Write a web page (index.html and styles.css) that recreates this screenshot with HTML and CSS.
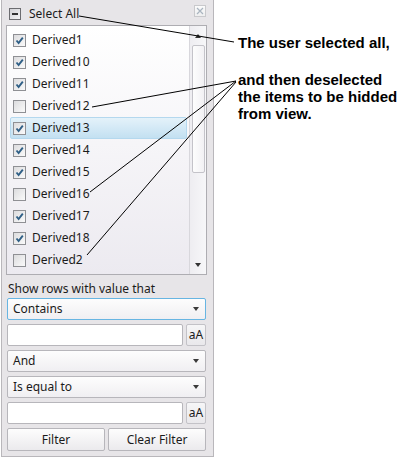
FILE: index.html
```html
<!DOCTYPE html>
<html>
<head>
<meta charset="utf-8">
<link rel="stylesheet" href="styles.css">
</head>
<body>
<div class="page">
  <div class="panel">
    <div class="header">
      <span class="chk chk-partial"><span class="dash"></span></span>
      <span class="header-label">Select All</span>
      <span class="spacer"></span>
      <span class="close-btn">
        <svg width="8" height="8" viewBox="0 0 8 8"><path d="M1 1L7 7M7 1L1 7" stroke="#a9b4bf" stroke-width="1.2" fill="none"/></svg>
      </span>
    </div>
    <div class="listbox">
      <div class="rows">
        <div class="row"><span class="chk on"><svg viewBox="0 0 11 11"><path d="M2.5 5.5L4.6 8L8.8 2.6" /></svg></span><span class="lbl">Derived1</span></div>
        <div class="row"><span class="chk on"><svg viewBox="0 0 11 11"><path d="M2.5 5.5L4.6 8L8.8 2.6" /></svg></span><span class="lbl">Derived10</span></div>
        <div class="row"><span class="chk on"><svg viewBox="0 0 11 11"><path d="M2.5 5.5L4.6 8L8.8 2.6" /></svg></span><span class="lbl">Derived11</span></div>
        <div class="row"><span class="chk"></span><span class="lbl">Derived12</span></div>
        <div class="row selected"><span class="chk on"><svg viewBox="0 0 11 11"><path d="M2.5 5.5L4.6 8L8.8 2.6" /></svg></span><span class="lbl">Derived13</span></div>
        <div class="row"><span class="chk on"><svg viewBox="0 0 11 11"><path d="M2.5 5.5L4.6 8L8.8 2.6" /></svg></span><span class="lbl">Derived14</span></div>
        <div class="row"><span class="chk on"><svg viewBox="0 0 11 11"><path d="M2.5 5.5L4.6 8L8.8 2.6" /></svg></span><span class="lbl">Derived15</span></div>
        <div class="row"><span class="chk"></span><span class="lbl">Derived16</span></div>
        <div class="row"><span class="chk on"><svg viewBox="0 0 11 11"><path d="M2.5 5.5L4.6 8L8.8 2.6" /></svg></span><span class="lbl">Derived17</span></div>
        <div class="row"><span class="chk on"><svg viewBox="0 0 11 11"><path d="M2.5 5.5L4.6 8L8.8 2.6" /></svg></span><span class="lbl">Derived18</span></div>
        <div class="row"><span class="chk"></span><span class="lbl">Derived2</span></div>
      </div>
      <div class="scrollbar">
        <span class="arrow up"></span>
        <span class="thumb"></span>
        <span class="track-rest"></span>
        <span class="arrow down"></span>
      </div>
    </div>
    <div class="filter-label">Show rows with value that</div>
    <div class="form">
      <div class="dropdown focused"><span class="dd-text">Contains</span><span class="dd-arrow"></span></div>
      <div class="input-row"><span class="textbox"></span><span class="case-btn">aA</span></div>
      <div class="dropdown"><span class="dd-text">And</span><span class="dd-arrow"></span></div>
      <div class="dropdown"><span class="dd-text">Is equal to</span><span class="dd-arrow"></span></div>
      <div class="input-row"><span class="textbox"></span><span class="case-btn">aA</span></div>
      <div class="buttons"><span class="btn">Filter</span><span class="btn">Clear Filter</span></div>
    </div>
  </div>
  <div class="notes">
    <p class="note note-first">The user selected all,</p>
    <p class="note note-second">and then deselected<br>the items to be hidded<br>from view.</p>
  </div>
</div>
<svg class="leaders" width="401" height="462" viewBox="0 0 401 462">
  <g stroke="#000" stroke-width="1" fill="none">
    <path d="M79 16L234 42"/>
    <path d="M92 107L236 81"/>
    <path d="M90 192L236 81"/>
    <path d="M87 255L236 82"/>
  </g>
</svg>
</body>
</html>
```
FILE: styles.css
```css
html, body {
  margin: 0;
  padding: 0;
  background: #ffffff;
}
body {
  width: 401px;
  height: 462px;
  overflow: hidden;
  position: relative;
  font-family: "Noto Sans", "Liberation Sans", sans-serif;
  font-size: 12px;
  color: #1b1b1b;
}
.page {
  display: flex;
  align-items: flex-start;
}
.panel {
  margin-left: 1px;
  width: 213px;
  height: 457px;
  box-sizing: border-box;
  border: 1px solid #b9b7bb;
  border-top: none;
  background: #e7e5e8;
  padding: 0 6px 5px 4px;
  display: flex;
  flex-direction: column;
}
.header {
  height: 25px;
  display: flex;
  align-items: center;
  padding-left: 3px;
  box-sizing: border-box;
  padding-top: 8px;
  padding-bottom: 5px;
}
.header-label {
  margin-left: 8px;
  line-height: 16px;
  font-size: 12px;
}
.spacer { flex: 1; }
.close-btn {
  width: 12px;
  height: 12px;
  box-sizing: border-box;
  border: 1px solid #c9c9cc;
  background: linear-gradient(#fbfbfb, #eeeeef);
  display: flex;
  align-items: center;
  justify-content: center;
  margin-right: 1px;
  margin-top: -7px;
}
.chk {
  width: 13px;
  height: 13px;
  box-sizing: border-box;
  border: 1px solid #8f9094;
  background: linear-gradient(135deg, #dcdcde, #fafafa);
  display: flex;
  align-items: center;
  justify-content: center;
  flex: none;
}
.chk svg {
  width: 11px;
  height: 11px;
}
.chk svg path {
  stroke: #2f5f86;
  stroke-width: 1.9;
  fill: none;
}
.chk-partial {
  width: 12px;
  height: 12px;
  border-color: #6c6c70;
  background: linear-gradient(135deg, #d2d2d6, #f4f4f6);
}
.dash {
  width: 6px;
  height: 2px;
  background: #333;
}
.listbox {
  height: 250px;
  box-sizing: border-box;
  border: 1px solid #aeadb2;
  background: linear-gradient(#ffffff, #eceaf0);
  display: flex;
}
.rows {
  flex: 1;
  padding: 3px 2px 0 3px;
  display: flex;
  flex-direction: column;
}
.row {
  height: 22px;
  box-sizing: border-box;
  display: flex;
  align-items: center;
  padding-left: 3px;
  border: 1px solid transparent;
  border-radius: 2px;
}
.row .chk {
  margin-left: -1px;
}
.row.selected {
  background: linear-gradient(#e4f2fa, #c3e0f1);
  border-color: #b4d8ee;
}
.lbl {
  margin-left: 6px;
  line-height: 16px;
  font-size: 12px;
}
.scrollbar {
  width: 17px;
  box-sizing: border-box;
  border-left: 1px solid #d8d7dc;
  background: linear-gradient(90deg, #eeedf1, #f7f7f9);
  display: flex;
  flex-direction: column;
  align-items: center;
}
.arrow {
  width: 0;
  height: 0;
  border-left: 3.5px solid transparent;
  border-right: 3.5px solid transparent;
}
.arrow.up {
  margin-top: 8px;
  border-bottom: 4px solid #333;
}
.arrow.down {
  margin-bottom: 7px;
  border-top: 4px solid #333;
}
.thumb {
  margin-top: 7px;
  width: 13px;
  height: 128px;
  box-sizing: border-box;
  border: 1px solid #c4c3c9;
  border-radius: 2px;
  background: linear-gradient(90deg, #fdfdfd, #f2f1f4);
}
.track-rest { flex: 1; }
.filter-label {
  height: 23px;
  box-sizing: border-box;
  padding-top: 6px;
  padding-left: 2px;
  line-height: 16px;
  font-size: 12px;
  color: #1b1b1b;
}
.form {
  margin: 0 1px;
  display: flex;
  flex-direction: column;
  gap: 4px;
}
.dropdown {
  height: 22px;
  box-sizing: border-box;
  border: 1px solid #b7b6bb;
  border-radius: 2px;
  background: linear-gradient(#fdfdfd, #f0eff2);
  display: flex;
  align-items: center;
  padding: 0 5px 0 5px;
}
.dropdown.focused {
  border-color: #67b5e2;
}
.dd-text {
  flex: 1;
  line-height: 16px;
  font-size: 12px;
}
.dd-arrow {
  width: 0;
  height: 0;
  border-left: 3.5px solid transparent;
  border-right: 3.5px solid transparent;
  border-top: 4px solid #3a3a3a;
  margin-right: 1px;
}
.input-row {
  height: 22px;
  display: flex;
  gap: 3px;
}
.textbox {
  flex: 1;
  box-sizing: border-box;
  border: 1px solid #b7b6bb;
  border-radius: 2px;
  background: #ffffff;
}
.case-btn {
  width: 20px;
  box-sizing: border-box;
  border: 1px solid #c3c2c7;
  border-radius: 2px;
  background: linear-gradient(#f6f6f7, #e9e8eb);
  display: flex;
  align-items: center;
  justify-content: center;
  font-size: 12px;
  line-height: 16px;
}
.buttons {
  height: 23px;
  display: flex;
  gap: 3px;
}
.btn {
  flex: 1;
  box-sizing: border-box;
  border: 1px solid #b7b6bb;
  border-radius: 2px;
  background: linear-gradient(#fdfdfd, #ebeaed);
  display: flex;
  align-items: center;
  justify-content: center;
  line-height: 16px;
  font-size: 12px;
}
.notes {
  margin-left: 24px;
  font-family: "Liberation Sans", Arial, sans-serif;
  font-weight: bold;
  font-size: 15px;
  line-height: 17px;
  color: #000;
}
.note { margin: 0; }
.note-first { margin-top: 34px; }
.note-second { margin-top: 20px; }
.leaders {
  position: absolute;
  left: 0;
  top: 0;
  pointer-events: none;
}
```
